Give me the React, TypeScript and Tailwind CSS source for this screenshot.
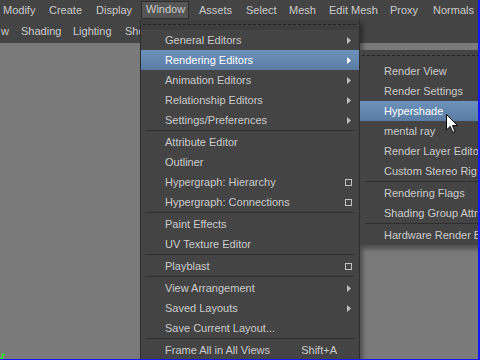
import React from "react";

type Item =
  | { t: string; arrow?: boolean; box?: boolean; hl?: boolean; sc?: string }
  | "sep";

const mainItems: Item[] = [
  { t: "General Editors", arrow: true },
  { t: "Rendering Editors", arrow: true, hl: true },
  { t: "Animation Editors", arrow: true },
  { t: "Relationship Editors", arrow: true },
  { t: "Settings/Preferences", arrow: true },
  "sep",
  { t: "Attribute Editor" },
  { t: "Outliner" },
  { t: "Hypergraph: Hierarchy", box: true },
  { t: "Hypergraph: Connections", box: true },
  "sep",
  { t: "Paint Effects" },
  { t: "UV Texture Editor" },
  "sep",
  { t: "Playblast", box: true },
  "sep",
  { t: "View Arrangement", arrow: true },
  { t: "Saved Layouts", arrow: true },
  { t: "Save Current Layout..." },
  "sep",
  { t: "Frame All in All Views", sc: "Shift+A" },
];

const subItems: Item[] = [
  { t: "Render View" },
  { t: "Render Settings" },
  { t: "Hypershade", hl: true },
  { t: "mental ray" },
  { t: "Render Layer Editor" },
  { t: "Custom Stereo Rig Editor" },
  "sep",
  { t: "Rendering Flags" },
  { t: "Shading Group Attributes" },
  "sep",
  { t: "Hardware Render Buffer" },
];

const topMenu: [string, number][] = [
  ["Modify", 44],
  ["Create", 47],
  ["Display", 50],
  ["Window", 53],
  ["Assets", 47],
  ["Select", 43],
  ["Mesh", 40],
  ["Edit Mesh", 61],
  ["Proxy", 43],
  ["Normals", 50],
];

const Arrow = ({ color }: { color: string }) => (
  <svg width="4" height="7" viewBox="0 0 4 7">
    <path d="M0 0 L4 3.5 L0 7 Z" fill={color} />
  </svg>
);

const Box = () => <div className="w-[7px] h-[7px] border border-[#c4c4c4]" />;

const Dashed = () => (
  <div className="h-px bg-[repeating-linear-gradient(to_right,#222_0px,#222_3px,transparent_3px,transparent_5px)]" />
);

const Sep = () => (
  <div className="h-[2px] ml-[5px] mr-[5px]">
    <div className="h-px bg-[#2e2e2e]" />
  </div>
);

function MainMenu() {
  return (
    <div className="absolute left-[140px] top-[20px] w-[220px] h-[345px] bg-[#444] border-x border-[#2e2e2e] shadow-[3px_3px_4px_rgba(0,0,0,0.35)]">
      <div className="h-[10px] bg-[#3e3e3e] pt-[4px] px-[2px]">
        <Dashed />
      </div>
      {mainItems.map((it, i) =>
        it === "sep" ? (
          <Sep key={i} />
        ) : (
          <div
            key={i}
            className={`h-[20px] flex items-center pl-[24px] pr-[6px] whitespace-nowrap ${
              it.hl
                ? "bg-gradient-to-b from-[#6d92bb] to-[#5a7ca3] text-white"
                : "text-[#cbcbcb]"
            }`}
          >
            <span className="flex-1">{it.t}</span>
            {it.sc && <span className="mr-[7px]">{it.sc}</span>}
            <span className="w-[9px] flex justify-center items-center">
              {it.arrow && <Arrow color={it.hl ? "#ffffff" : "#bdbdbd"} />}
              {it.box && <Box />}
            </span>
          </div>
        )
      )}
    </div>
  );
}

function SubMenu() {
  return (
    <div className="absolute left-[359px] top-[50px] w-[150px] bg-[#444] border-l border-[#2e2e2e] shadow-[3px_4px_4px_rgba(0,0,0,0.35)]">
      <div className="h-[11px] pt-[5px] px-[2px]">
        <Dashed />
      </div>
      {subItems.map((it, i) =>
        it === "sep" ? (
          <Sep key={i} />
        ) : (
          <div
            key={i}
            className={`h-[20px] flex items-center pl-[24px] whitespace-nowrap overflow-hidden ${
              it.hl
                ? "bg-gradient-to-b from-[#6d92bb] to-[#5a7ca3] text-white"
                : "text-[#cbcbcb]"
            }`}
          >
            {it.t}
          </div>
        )
      )}
    </div>
  );
}

export default function App() {
  return (
    <div className="relative w-[480px] h-[360px] overflow-hidden bg-[#7a7a7a] font-['Liberation_Sans',Arial,sans-serif] text-[11px] leading-none">
      <div className="h-[20px] bg-[#444] flex text-[#cbcbcb]">
        {topMenu.map(([label, w], i) => (
          <div
            key={label}
            style={{ width: w }}
            className={`shrink-0 h-[20px] flex items-center ${i === 0 ? "pl-[3px]" : ""}`}
          >
            {label === "Window" ? (
              <span className="w-[48px] h-[18px] mt-[-1px] pl-[4px] flex items-center bg-[#555] border border-[#2d2d2d]">
                {label}
              </span>
            ) : (
              <span className={i === 0 ? "" : "pl-[5px]"}>{label}</span>
            )}
          </div>
        ))}
      </div>
      <div className="h-[23px] bg-[#444] flex items-center text-[#cbcbcb] whitespace-nowrap">
        <span className="w-[21px] shrink-0 pl-[1px]">w</span>
        <span className="w-[52px] shrink-0">Shading</span>
        <span className="w-[52px] shrink-0">Lighting</span>
        <span className="shrink-0">Show</span>
      </div>
      <MainMenu />
      <SubMenu />
      <svg
        className="absolute left-[446px] top-[114px]"
        width="13"
        height="20"
        viewBox="0 0 13 20"
      >
        <path
          d="M0.5 0.5 L0.5 16 L4.2 12.4 L6.8 18.5 L9 17.5 L6.5 11.6 L11.5 11.6 Z"
          fill="#fff"
          stroke="#000"
          strokeWidth="1"
          strokeLinejoin="miter"
        />
      </svg>
      <svg className="absolute left-0 top-[353px]" width="6" height="6" viewBox="0 0 6 6">
        <path d="M0 5.5 H2.5 V1.5 H5" stroke="#22ee22" strokeWidth="1.5" fill="none" />
      </svg>
      <div className="absolute right-0 top-0 w-[2px] h-full bg-[#1515f5]" />
      <div className="absolute left-0 bottom-0 w-full h-px bg-[#1515f5]" />
    </div>
  );
}
